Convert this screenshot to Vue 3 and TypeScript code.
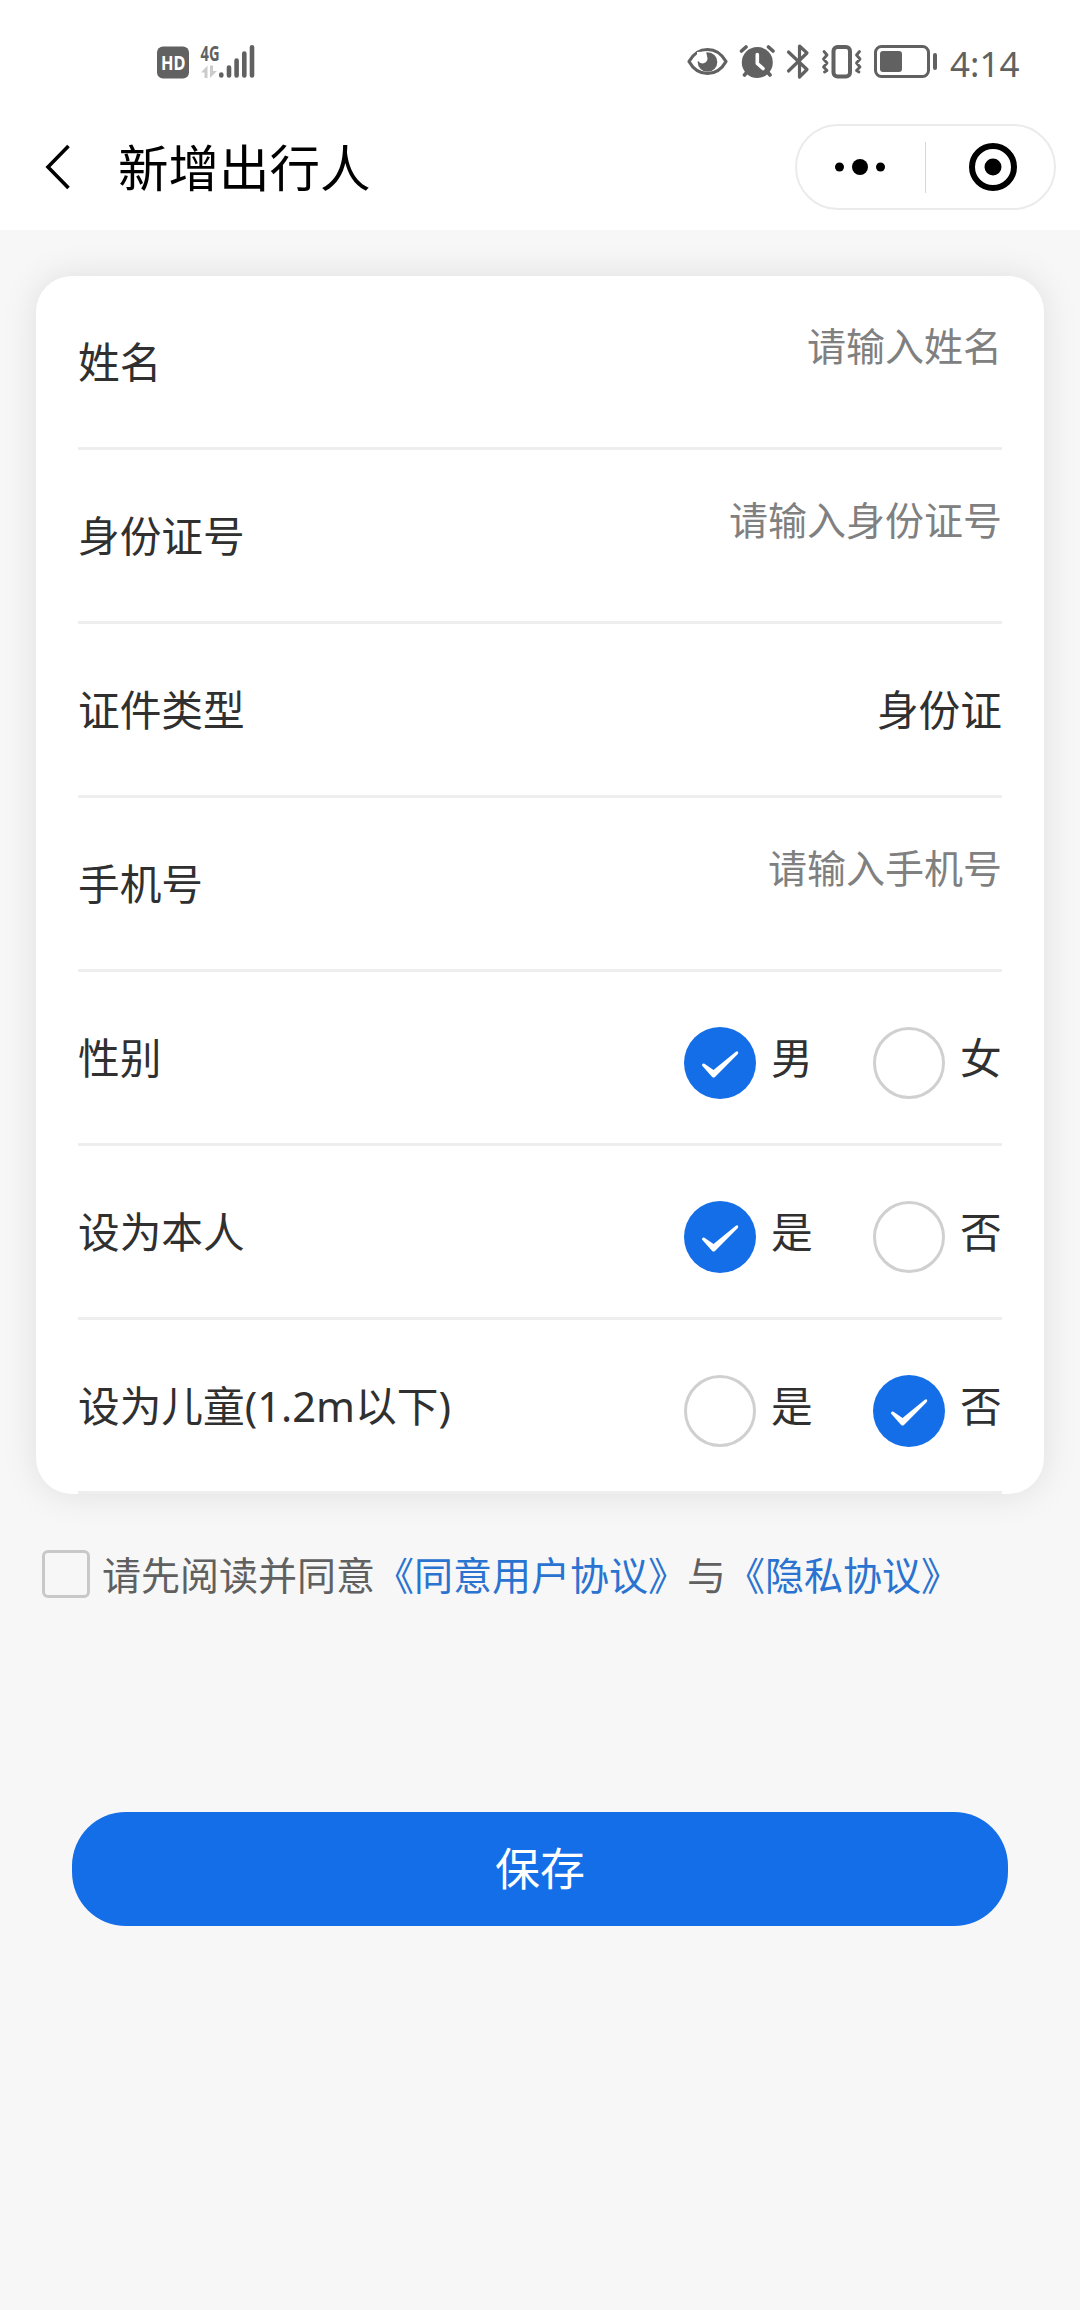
<script setup lang="ts">
import { ref } from 'vue'

interface TextField {
  label: string
  placeholder?: string
  value?: string
}

interface ChoiceField {
  label: string
  options: string[]
  selected: number
}

const textFields: TextField[] = [
  { label: '姓名', placeholder: '请输入姓名' },
  { label: '身份证号', placeholder: '请输入身份证号' },
  { label: '证件类型', value: '身份证' },
  { label: '手机号', placeholder: '请输入手机号' },
]

const choiceFields = ref<ChoiceField[]>([
  { label: '性别', options: ['男', '女'], selected: 0 },
  { label: '设为本人', options: ['是', '否'], selected: 0 },
  { label: '设为儿童(1.2m以下)', options: ['是', '否'], selected: 1 },
])
</script>

<template>
  <div class="page">
    <header class="top">
      <div class="status">
        <svg class="status-left" width="110" height="50" viewBox="150 38 110 50">
          <rect x="157" y="46.5" width="32" height="32" rx="6" fill="#616161" />
          <text x="161" y="70.300" class="hd" textLength="24.5" lengthAdjust="spacingAndGlyphs">HD</text>
          <text x="200.5" y="60.5" class="net" textLength="19" lengthAdjust="spacingAndGlyphs">4G</text>
          <path d="M201 72.500L207.500 65.500V78H204.500V72.500ZM210 65.500H213V71H217L210 78Z" fill="#cbcbcb" />
          <g stroke="#616161" stroke-width="4.600" stroke-linecap="round">
            <path d="M221.300 74.500V75.500M229 67.500V75.500M236.600 60.500V75.500M244.300 53.500V75.500M252 47.300V75.500" />
          </g>
        </svg>
        <div class="status-right">
          <svg width="256" height="50" viewBox="684 38 256 50" fill="none" stroke="#616161" stroke-linecap="round" stroke-linejoin="round">
            <path d="M689 61.500C698 45.500 717 45.500 726 61.500C717 77.500 698 77.500 689 61.500Z" stroke-width="3.200" />
            <circle cx="707.500" cy="62" r="9.800" fill="#616161" stroke="none" />
            <circle cx="702.500" cy="58.500" r="5" fill="#fff" stroke="none" />
            <path d="M697 52L706 51.500L707 56L702 60L697 58Z" fill="#fff" stroke="none" />
            <circle cx="757.300" cy="62.500" r="15.500" fill="#616161" stroke="none" />
            <path d="M741.500 51L746 47M773 51L768.500 47M744.500 75L748 71M770 75L766.500 71" stroke-width="3.600" />
            <path d="M757.300 54.500V63.500L763 68.500" stroke="#fff" stroke-width="3.600" />
            <path d="M788.500 52L807 69.500L799.500 77V46L807 53L788.500 71" stroke-width="3.200" />
            <rect x="833.500" y="47" width="16.500" height="29.500" rx="4" stroke-width="4" />
            <path d="M824 51.500L827 55L823.500 59L827 63L823.500 67L827 70.500L824.500 72M859.500 51.500L856.500 55L860 59L856.500 63L860 67L856.500 70.500L859 72" stroke-width="2.800" />
            <rect x="875.500" y="46.500" width="53" height="30" rx="6" stroke-width="3" />
            <rect x="880" y="51" width="22" height="21" rx="3" fill="#616161" stroke="none" />
            <path d="M935 55V68" stroke-width="4" />
          </svg>
          <span class="clock">4:14</span>
        </div>
      </div>

      <div class="nav">
        <svg class="back" width="30" height="50" viewBox="0 0 30 50">
          <path d="M26.500 4L6 25L26.500 46" fill="none" stroke="#000" stroke-width="3.600" />
        </svg>
        <h1 class="title">新增出行人</h1>
        <div class="capsule">
          <svg width="50" height="18" viewBox="0 0 50 18">
            <circle cx="4.500" cy="9" r="4.500" />
            <circle cx="25" cy="9" r="8" />
            <circle cx="45.500" cy="9" r="4.500" />
          </svg>
          <i class="split"></i>
          <svg width="48" height="48" viewBox="0 0 48 48">
            <circle cx="24" cy="24" r="21" fill="none" stroke="#000" stroke-width="6" />
            <circle cx="24" cy="24" r="8.500" />
          </svg>
        </div>
      </div>
    </header>

    <main class="body">
      <section class="card">
        <div v-for="f in textFields" :key="f.label" class="row">
          <span class="label">{{ f.label }}</span>
          <span v-if="f.value" class="value">{{ f.value }}</span>
          <span v-else class="placeholder">{{ f.placeholder }}</span>
        </div>
        <div v-for="f in choiceFields" :key="f.label" class="row">
          <span class="label">{{ f.label }}</span>
          <div class="options">
            <div v-for="(o, i) in f.options" :key="o" class="option" @click="f.selected = i">
              <span class="radio" :class="{ on: f.selected === i }">
                <svg v-if="f.selected === i" width="72" height="72" viewBox="0 0 72 72">
                  <path d="M18 38.500Q18 36 20.500 36.800L29.500 43L51.500 25Q53.500 23.600 54.200 25.200Q54.400 26.200 53.600 27.200L31 50Q29.500 51.200 28.200 50Z" fill="#fff" />
                </svg>
              </span>
              <span class="option-text">{{ o }}</span>
            </div>
          </div>
        </div>
      </section>

      <div class="agree">
        <span class="box"></span>
        <p class="terms">请先阅读并同意<a>《同意用户协议》</a>与<a>《隐私协议》</a></p>
      </div>

      <button class="save" type="button">保存</button>
    </main>
  </div>
</template>

<style>
body {
  background: #f7f7f7;
}
</style>

<style scoped>
.page {
  width: 1080px;
  height: 2310px;
  overflow: hidden;
  background: #f7f7f7;
  color: #303030;
  font-family: "Noto Sans", "Noto Sans CJK SC", sans-serif;
}
.top {
  height: 230px;
  background: #fff;
}
.status {
  display: flex;
  justify-content: space-between;
  height: 100px;
  padding: 38px 60px 0 150px;
  box-sizing: border-box;
}
.status-left {
  display: block;
}
.hd {
  font: 700 19px "Noto Sans", sans-serif;
  fill: #fff;
}
.net {
  font: 700 22px "Noto Sans", sans-serif;
  fill: #616161;
}
.status-right {
  display: flex;
}
.clock {
  margin-left: 10px;
  width: 70px;
  font-size: 35px;
  line-height: 51px;
  color: #616161;
  white-space: nowrap;
}
.nav {
  display: flex;
  align-items: center;
  height: 134px;
  padding: 0 24px 0 42px;
  box-sizing: border-box;
}
.title {
  margin: 2px 0 0 46px;
  font-size: 50.5px;
  line-height: 70px;
  font-weight: 400;
  color: #000;
}
.capsule {
  display: flex;
  align-items: center;
  width: 261px;
  height: 86px;
  margin-left: auto;
  padding: 0 0 0 38px;
  box-sizing: border-box;
  border: 2px solid #ebebeb;
  border-radius: 43px;
}
.split {
  width: 1px;
  height: 51px;
  margin: 0 43px 0 40px;
  background: #d8d8d8;
}
.body {
  padding: 46px 36px 0;
}
.card {
  padding: 0 42px;
  border-radius: 36px;
  background: #fff;
  box-shadow: 0 0 36px rgba(0, 0, 0, 0.1);
}
.row {
  display: flex;
  align-items: center;
  justify-content: space-between;
  height: 174px;
  box-sizing: border-box;
  border-bottom: 3px solid #eee;
  font-size: 41.7px;
  line-height: 60px;
}
.placeholder {
  margin-bottom: 32px;
  font-size: 39px;
  color: #808080;
}
.options {
  display: flex;
  gap: 60px;
}
.option {
  display: flex;
  align-items: center;
  gap: 15px;
}
.option-text {
  width: 42px;
}
.radio {
  width: 72px;
  height: 72px;
  margin-top: 10px;
  box-sizing: border-box;
  border: 3px solid #d0d0d0;
  border-radius: 50%;
}
.radio.on {
  border: 0;
  background: #146ee8;
}
.radio svg {
  display: block;
}
.agree {
  display: flex;
  align-items: center;
  height: 60px;
  margin: 50px 0 0 6px;
}
.box {
  width: 48px;
  height: 48px;
  box-sizing: border-box;
  border: 3px solid #c8c8c8;
  border-radius: 6px;
}
.terms {
  margin: 2px 0 0 12px;
  font-size: 39px;
  line-height: 60px;
  color: #606060;
  white-space: nowrap;
}
.terms a {
  color: #2a73d0;
}
.save {
  display: block;
  width: 936px;
  height: 114px;
  margin: 208px auto 0;
  padding: 0;
  border: 0;
  border-radius: 54px;
  background: #146ee8;
  color: #fff;
  font: 400 45px/114px "Noto Sans", "Noto Sans CJK SC", sans-serif;
}
</style>
